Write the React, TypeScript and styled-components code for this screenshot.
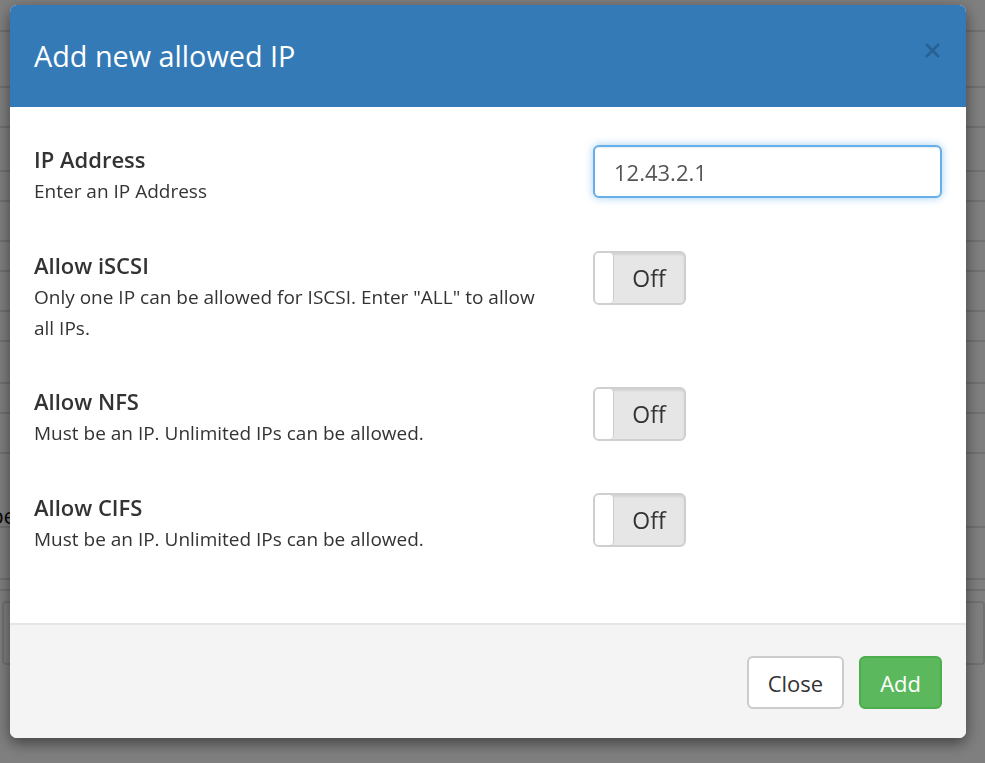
import styled, { createGlobalStyle } from 'styled-components';

const GlobalStyle = createGlobalStyle`
  html, body {
    margin: 0;
    padding: 0;
    height: 100%;
    overflow: hidden;
  }

  body {
    font-family: 'Open Sans', 'Noto Sans', Arial, sans-serif;
    color: #333;
    background: #fff;
  }

  * {
    box-sizing: border-box;
  }
`;

interface Rule {
  id: string;
  label: string;
  help: string;
}

const protocols: Rule[] = [
  {
    id: 'iscsi',
    label: 'Allow iSCSI',
    help: 'Only one IP can be allowed for ISCSI. Enter "ALL" to allow all IPs.',
  },
  {
    id: 'nfs',
    label: 'Allow NFS',
    help: 'Must be an IP. Unlimited IPs can be allowed.',
  },
  {
    id: 'cifs',
    label: 'Allow CIFS',
    help: 'Must be an IP. Unlimited IPs can be allowed.',
  },
];

// rows of the list page that sits under the dialog
const pageRows: Array<{ h: number; text?: string }> = [
  { h: 32 },
  { h: 56 },
  { h: 40 },
  { h: 44 },
  { h: 30 },
  { h: 40 },
  { h: 30 },
  { h: 40 },
  { h: 30 },
  { h: 42 },
  { h: 30 },
  { h: 40 },
  { h: 74, text: 'Type' },
  { h: 52 },
  { h: 11 },
];

const App = () => {
  return (
    <>
      <GlobalStyle />
      <Page>
        {pageRows.map((row, i) => (
          <PageRow key={i} height={row.h}>
            {row.text && <PageCell>{row.text}</PageCell>}
          </PageRow>
        ))}
        <PagePanel />
      </Page>

      <Backdrop>
        <Dialog>
          <Header>
            <Title>Add new allowed IP</Title>
            <CloseIcon aria-label="Close">
              <svg width="15" height="15" viewBox="0 0 15 15">
                <path
                  d="M2 2 L13 13 M13 2 L2 13"
                  stroke="currentColor"
                  strokeWidth="2.8"
                  strokeLinecap="square"
                />
              </svg>
            </CloseIcon>
          </Header>

          <Body>
            <FieldRow>
              <FieldText>
                <FieldLabel>IP Address</FieldLabel>
                <FieldHelp>Enter an IP Address</FieldHelp>
              </FieldText>
              <TextInput defaultValue="12.43.2.1" />
            </FieldRow>

            {protocols.map((p) => (
              <FieldRow key={p.id}>
                <FieldText>
                  <FieldLabel>{p.label}</FieldLabel>
                  <FieldHelp>{p.help}</FieldHelp>
                </FieldText>
                <Switch>
                  <SwitchHandle />
                  <SwitchLabel>Off</SwitchLabel>
                </Switch>
              </FieldRow>
            ))}
          </Body>

          <Footer>
            <Button variant="default">Close</Button>
            <Button variant="success">Add</Button>
          </Footer>
        </Dialog>
      </Backdrop>
    </>
  );
};

const Page = styled.div`
  display: flex;
  flex-direction: column;
`;

const PageRow = styled.div<{ height: number }>`
  height: ${(props) => props.height}px;
  display: flex;
  align-items: flex-end;
  border-bottom: 2px solid #e2e2e2;
`;

const PageCell = styled.span`
  margin: 0 0 -4px -33px;
  font-size: 22px;
  line-height: 30px;
  color: #111;
`;

const PagePanel = styled.div`
  height: 64px;
  margin-top: 10px;
  margin-left: 2px;
  border: 2px solid #e2e2e2;
  border-radius: 4px;
`;

const Backdrop = styled.div`
  position: fixed;
  inset: 0;
  background: rgba(0, 0, 0, 0.5);
`;

const Dialog = styled.div`
  position: absolute;
  top: 5px;
  left: 10px;
  width: 956px;
  height: 733px;
  display: flex;
  flex-direction: column;
  background: #fff;
  border-radius: 7px;
  box-shadow: 0 5px 15px rgba(0, 0, 0, 0.5);
  overflow: hidden;
`;

const Header = styled.div`
  height: 102px;
  flex-shrink: 0;
  display: flex;
  align-items: center;
  justify-content: space-between;
  padding: 0 24px;
  background: #337ab7;
`;

const Title = styled.h4`
  margin: 0 0 2px;
  font-size: 28.8px;
  font-weight: 400;
  color: #fff;
`;

const CloseIcon = styled.button`
  display: flex;
  padding: 0;
  margin: 0 2px 12px 0;
  border: none;
  background: none;
  color: rgba(0, 0, 0, 0.2);
  cursor: pointer;
`;

const Body = styled.div`
  flex: 1;
  display: flex;
  flex-direction: column;
  gap: 43.5px;
  padding: 38px 24px 0;
`;

const FieldRow = styled.div`
  display: grid;
  grid-template-columns: 1fr 349px;
  column-gap: 32px;
  align-items: start;
`;

const FieldText = styled.div`
  display: flex;
  flex-direction: column;
  padding-right: 20px;
`;

const FieldLabel = styled.label`
  font-size: 22px;
  font-weight: 600;
  line-height: 28px;
  margin-bottom: 3px;
`;

const FieldHelp = styled.p`
  margin: 0;
  font-size: 19px;
  line-height: 31px;
`;

const TextInput = styled.input`
  width: 100%;
  height: 53px;
  padding: 0 19px;
  font-family: inherit;
  font-size: 22px;
  color: #555;
  background: #fff;
  border: 2px solid #66afe9;
  border-radius: 6px;
  outline: none;
  box-shadow: inset 0 1px 1px rgba(0, 0, 0, 0.075), 0 0 8px rgba(102, 175, 233, 0.6);
`;

const Switch = styled.div`
  display: flex;
  width: 93px;
  height: 54px;
  border: 2px solid #cfcfcf;
  border-radius: 6px;
  overflow: hidden;
  background: #e6e6e6;
  box-shadow: inset 0 2px 2px rgba(0, 0, 0, 0.08);
`;

const SwitchHandle = styled.span`
  width: 19px;
  background: #fff;
  border-right: 1px solid #ccc;
  border-radius: 0 4px 4px 0;
`;

const SwitchLabel = styled.span`
  flex: 1;
  display: flex;
  align-items: center;
  justify-content: center;
  font-size: 23px;
  color: #333;
`;

const Footer = styled.div`
  flex-shrink: 0;
  display: flex;
  justify-content: flex-end;
  gap: 15px;
  height: 115px;
  padding: 31px 24px 0;
  background: #f4f4f4;
  border-top: 2px solid #e5e5e5;
`;

const Button = styled.button<{ variant: 'default' | 'success' }>`
  height: 53px;
  padding: 0 19px;
  font-family: inherit;
  font-size: 22px;
  border-radius: 6px;
  cursor: pointer;
  border: 2px solid ${(props) => (props.variant === 'success' ? '#4cae4c' : '#ccc')};
  background: ${(props) => (props.variant === 'success' ? '#5cb85c' : '#fff')};
  color: ${(props) => (props.variant === 'success' ? '#fff' : '#333')};
`;

export default App;
